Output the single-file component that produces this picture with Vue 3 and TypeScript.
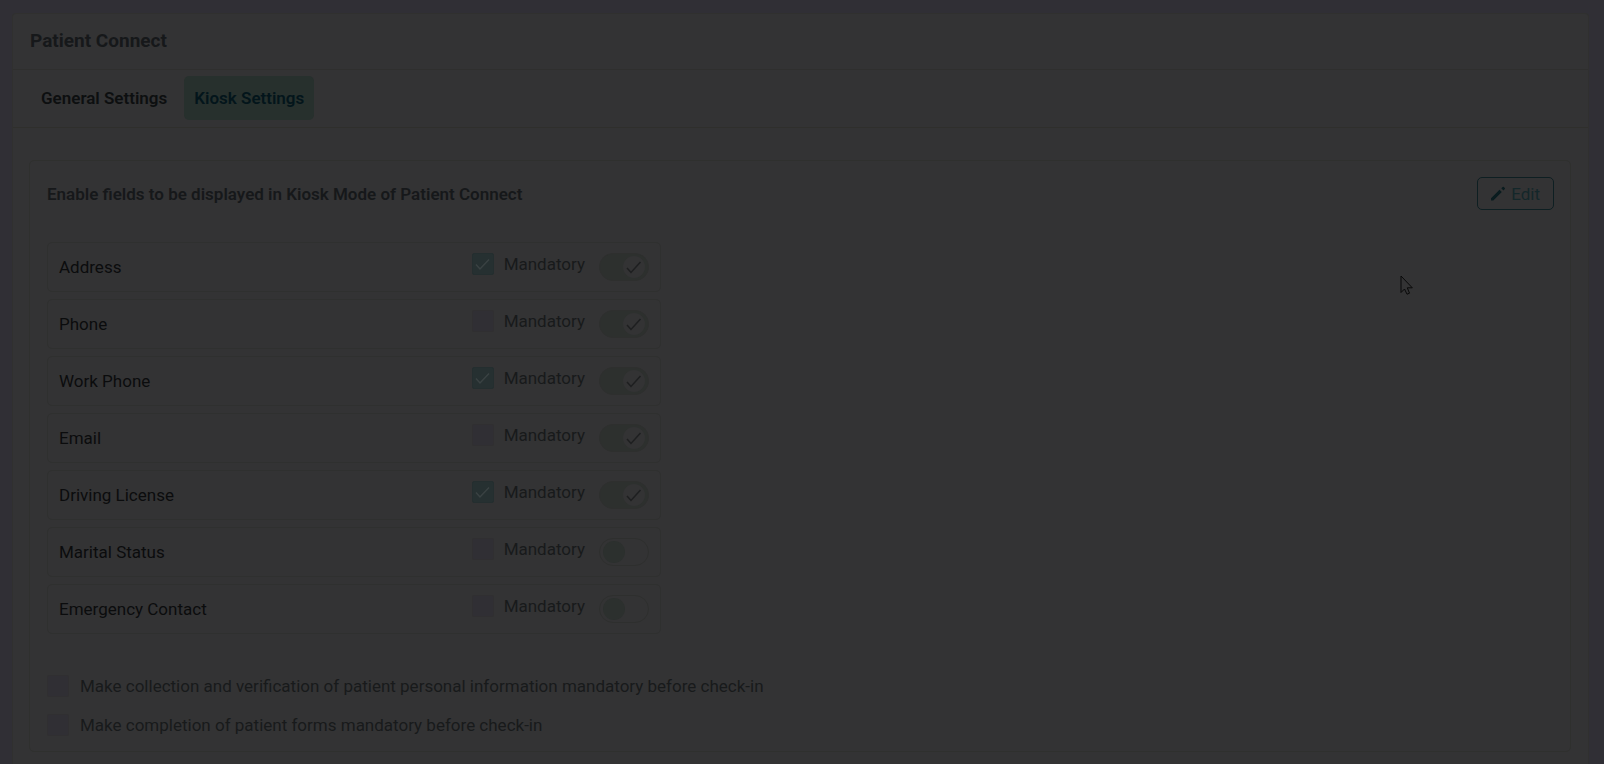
<script setup lang="ts">
import { ref } from 'vue'

interface Field {
  id: string
  label: string
  mandatory: boolean
  enabled: boolean
}

const tabs = ['General Settings', 'Kiosk Settings']
const activeTab = ref('Kiosk Settings')

const fields = ref<Field[]>([
  { id: 'address', label: 'Address', mandatory: true, enabled: true },
  { id: 'phone', label: 'Phone', mandatory: false, enabled: true },
  { id: 'work-phone', label: 'Work Phone', mandatory: true, enabled: true },
  { id: 'email', label: 'Email', mandatory: false, enabled: true },
  { id: 'license', label: 'Driving License', mandatory: true, enabled: true },
  { id: 'marital', label: 'Marital Status', mandatory: false, enabled: false },
  { id: 'emergency', label: 'Emergency Contact', mandatory: false, enabled: false },
])

const rules = ref([
  { label: 'Make collection and verification of patient personal information mandatory before check-in', checked: false },
  { label: 'Make completion of patient forms mandatory before check-in', checked: false },
])
</script>

<template>
  <div class="page">
    <main class="panel">
      <header class="panel-head"><h1>Patient Connect</h1></header>
      <nav class="tabs">
        <button
          v-for="tab in tabs"
          :key="tab"
          type="button"
          class="tab"
          :class="{ active: tab === activeTab }"
          @click="activeTab = tab"
        >{{ tab }}</button>
      </nav>
      <section class="card">
        <div class="card-head">
          <h2>Enable fields to be displayed in Kiosk Mode of Patient Connect</h2>
          <button type="button" class="edit">
            <svg width="16" height="16" viewBox="0 0 16 16" aria-hidden="true">
              <path d="M1 12.2 9.500 3.700 11.800 6 3.300 14.500H1z M11.300 2.300 12.700.9a.8.8 0 0 1 1.100 0l1 1a.8.8 0 0 1 0 1.100L13.400 4.400z" />
            </svg>
            <span>Edit</span>
          </button>
        </div>
        <ul class="fields">
          <li v-for="field in fields" :key="field.id" class="field">
            <span class="name">{{ field.label }}</span>
            <label class="check">
              <span class="box">
                <input v-model="field.mandatory" type="checkbox" />
                <svg v-if="field.mandatory" class="tick" width="22" height="22" viewBox="0 0 22 22" aria-hidden="true">
                  <path d="M4 11.5 8 16 17 6.5" />
                </svg>
              </span>
              <span>Mandatory</span>
            </label>
            <label class="switch">
              <input v-model="field.enabled" type="checkbox" role="switch" :aria-label="field.label" />
              <svg v-if="field.enabled" width="22" height="22" viewBox="0 0 22 22" aria-hidden="true">
                <path d="M4 12 8 16.5 17.500 6" />
              </svg>
            </label>
          </li>
        </ul>
        <div class="rules">
          <label v-for="rule in rules" :key="rule.label" class="check">
            <span class="box">
              <input v-model="rule.checked" type="checkbox" />
              <svg v-if="rule.checked" class="tick" width="22" height="22" viewBox="0 0 22 22" aria-hidden="true">
                <path d="M4 11.5 8 16 17 6.5" />
              </svg>
            </span>
            <span>{{ rule.label }}</span>
          </label>
        </div>
      </section>
    </main>
    <svg class="cursor" width="14" height="21" viewBox="0 0 14 21" aria-hidden="true">
      <path d="M1 1V17.500L4.500 14 7 19.200 9.500 18.200 7.300 12.800H12.300Z" />
    </svg>
  </div>
</template>

<style>
body {
  margin: 0;
  background: #302f35;
}
</style>

<style scoped>
.page {
  position: relative;
  box-sizing: border-box;
  min-height: 100vh;
  padding: 13px 15px 0 12px;
  display: flex;
  background: #302f35;
  color: #181a1b;
  font-family: Roboto, sans-serif;
  font-size: 17px;
  line-height: 22px;
}
.panel {
  flex: 1;
  min-width: 0;
  padding-bottom: 11px;
  background: #333334;
  border: 1px solid #30302f;
  border-bottom: 0;
  border-radius: 4px 4px 0 0;
}
.panel-head {
  padding: 15px 17px 16px;
  border-bottom: 1px solid #2f2f2e;
}
h1,
h2 {
  margin: 0;
  color: #16181a;
}
h1 {
  font-size: 19px;
  font-weight: 700;
  line-height: 24px;
}
h2 {
  font-size: 17px;
  font-weight: 600;
  line-height: 22px;
}
.tabs {
  display: flex;
  gap: 7px;
  padding: 6px 17px 7px;
  border-bottom: 1px solid #2f2f2c;
}
.tab {
  height: 44px;
  padding: 0 10px;
  border: 0;
  border-radius: 5px;
  background: transparent;
  color: #0d0f10;
  font: inherit;
  font-weight: 600;
}
.tab:first-child {
  padding-left: 11px;
}
.tab.active {
  background: #27302d;
  color: #03151b;
}
.card {
  margin: 32px 17px 0 16px;
  padding: 16px 16px 15px;
  border: 1px solid #2f302e;
  border-radius: 5px;
}
.card-head {
  display: flex;
  align-items: center;
  justify-content: space-between;
}
h2,
.fields,
.rules {
  margin-left: 1px;
}
.edit {
  display: flex;
  align-items: center;
  gap: 5px;
  height: 33px;
  padding: 0 13px 0 12px;
  border: 1px solid #0e1f22;
  border-radius: 5px;
  background: transparent;
  color: #14272a;
  font: inherit;
}
.edit svg {
  fill: #0a1c1f;
}
.fields {
  width: 614px;
  max-width: 100%;
  margin-top: 32px;
  margin-bottom: 0;
  padding: 0;
  display: grid;
  gap: 7px;
  list-style: none;
}
.field {
  box-sizing: border-box;
  height: 50px;
  display: flex;
  padding: 10px 11px 10px 10px;
  border: 1px solid #2f302f;
  border-radius: 5px;
}
.name {
  flex: 1;
  padding: 3px 0 0 1px;
  color: #0b0c0d;
}
.check {
  display: flex;
  gap: 11px;
}
.field .check {
  gap: 10px;
}
.box,
.switch {
  display: grid;
}
.box > *,
.switch > * {
  grid-area: 1 / 1;
}
.check input {
  appearance: none;
  box-sizing: border-box;
  width: 22px;
  height: 22px;
  margin: 0;
  border: 1px solid #302f31;
  border-radius: 2px;
  background: #302f34;
}
.check input:checked {
  background: #263031;
  border-color: #242e2f;
}
svg {
  pointer-events: none;
}
.tick path {
  fill: none;
  stroke: #3a4243;
  stroke-width: 1.5;
}
.switch {
  margin-left: 14px;
  height: 28px;
  align-items: center;
}
.switch input {
  appearance: none;
  box-sizing: border-box;
  width: 50px;
  height: 28px;
  margin: 0;
  padding: 2px 3px;
  display: flex;
  border: 1px solid #2e2f2e;
  border-radius: 14px;
}
.switch input::before {
  content: '';
  width: 22px;
  height: 22px;
  border-radius: 50%;
  background: #2c302e;
}
.switch input:checked {
  justify-content: flex-end;
  background: #2d302e;
}
.switch input:checked::before {
  background: #333334;
}
.switch svg {
  justify-self: end;
  margin-right: 4px;
}
.switch path {
  fill: none;
  stroke: #1e1f20;
  stroke-width: 1.5;
}
.rules {
  display: grid;
  gap: 17px;
  margin-top: 41px;
}
.cursor {
  position: absolute;
  left: 1400px;
  top: 275px;
}
.cursor path {
  fill: #333334;
  stroke: #090909;
  stroke-width: 1;
}
</style>
